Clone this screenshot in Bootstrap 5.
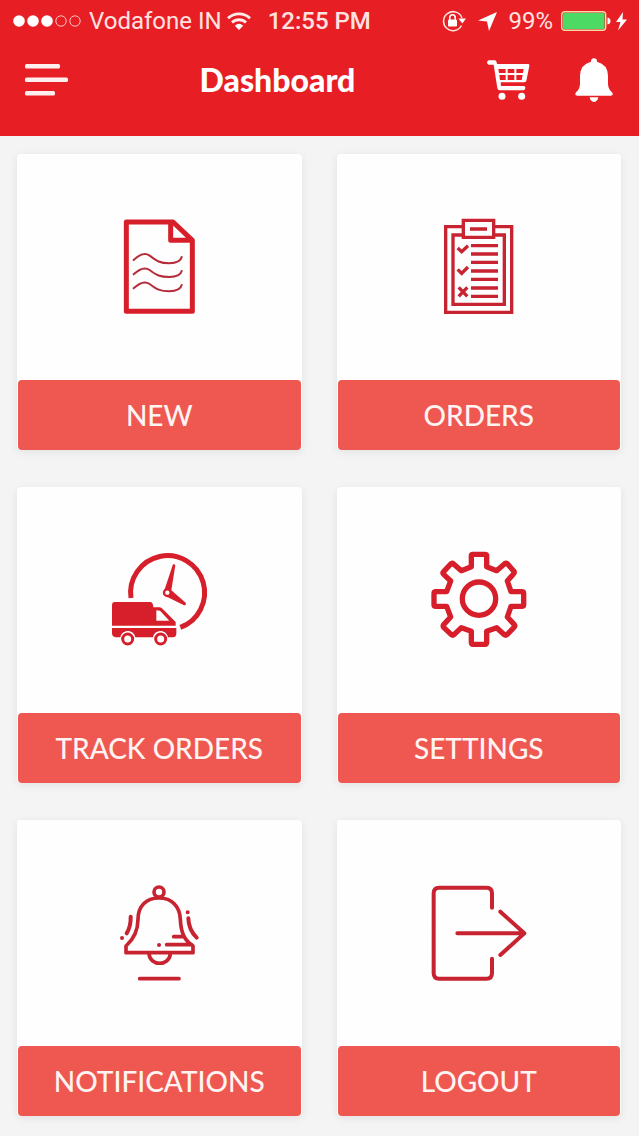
<!DOCTYPE html>
<html lang="en">
<head>
<meta charset="utf-8">
<meta name="viewport" content="width=device-width, initial-scale=1">
<title>Dashboard</title>
<link href="https://cdn.jsdelivr.net/npm/bootstrap@5.3.0/dist/css/bootstrap.min.css" rel="stylesheet">
<style>
  body { background: #f4f4f5; font-family: Lato, "Liberation Sans", sans-serif; }
  .app-header { background: #e81e25; color: #fff; height: 136px; }
  .status-bar { font: 400 24px/42px Roboto, "Liberation Sans", sans-serif; height: 42px; padding: 0 10px 0 13px; color: #ffe3e1; }
  .status-bar svg { flex: none; }
  .carrier { margin: 0 5px 0 8px; }
  .clock { margin-left: 17px; font-weight: 500; }
  .toolbar { height: 76px; padding: 0 26px 0 25px; }
  .toolbar h1 { font-size: 32px; line-height: 40px; font-weight: 900; }
  .icon-btn { border: 0; background: none; color: inherit; padding: 0; display: flex; }
  .bell-btn { margin-left: 45px; }
  .tiles { padding: 18px 18px 19px 17px; }
  .tiles .row { --bs-gutter-x: 35px; --bs-gutter-y: 37px; }
  .tile { border-radius: 4px; background: #fefefe; box-shadow: 0 2px 9px rgba(0,0,0,.08); color: #d71f2b; }
  .tile-art { height: 226px; }
  .tile-label { margin: 0 1px; height: 70px; line-height: 70px; background: #ee5851; color: #fff4f2; border-radius: 4px; font-family: "Lato Medium", Lato, "Liberation Sans", sans-serif; font-size: 28px; font-weight: 500; }
  .line { fill: none; stroke: currentColor; stroke-linecap: round; stroke-linejoin: round; }
  .line-dark { stroke: #c82331; }
  .line-wave { stroke: #b52b38; }
</style>
</head>
<body>
<header class="app-header">
  <div class="status-bar d-flex align-items-center text-nowrap">
    <svg width="68" height="12" viewBox="0 0 68 12" fill="#fff"><circle cx="6" cy="6" r="5.8"/><circle cx="20" cy="6" r="5.8"/><circle cx="34" cy="6" r="5.8"/><g fill="none" stroke="#ffc4c0"><circle cx="48" cy="6" r="5.2"/><circle cx="62" cy="6" r="5.2"/></g></svg>
    <span class="carrier">Vodafone IN</span>
    <svg width="24" height="18" viewBox="0 0 24 18" fill="none" stroke="#ffeceb" stroke-width="2.8"><path d="M1 6.3C7 .3 17 .3 23 6.3M5 10.6C9 6.8 15 6.8 19 10.6"/><path d="M12 18L7.800 13.700Q12 10 16.200 13.700Z" fill="#fff" stroke="none"/></svg>
    <span class="clock">12:55 PM</span>
    <div class="d-flex align-items-center ms-auto">
      <svg width="24" height="22" viewBox="0 0 24 22"><path d="M19.500 15.500A9.500 9.500 0 1 1 20 8" fill="none" stroke="#ffe3e1" stroke-width="1.500"/><path d="M16.500 8.500h7.500l-3.700 5z" fill="#fff"/><rect x="6" y="9.500" width="9" height="7" rx="1" fill="#fff"/><path d="M7.800 10V7.500a2.700 2.700 0 0 1 5.400 0V10" fill="none" stroke="#fff" stroke-width="1.600"/></svg>
      <svg class="mx-2" width="26" height="19" viewBox="0 0 26 19"><path d="M23 0L15 19 13 9.500 4 8.500Z" fill="#fff"/></svg>
      <span>99%</span>
      <svg class="ms-2" width="68" height="20" viewBox="0 0 68 20"><rect x=".7" y=".7" width="44" height="18.600" rx="3" fill="#b7322a" stroke="#ffd6a5" stroke-width="1.400"/><rect x="2" y="2" width="41.500" height="16" rx="1.500" fill="#4cd964"/><path d="M46.500 6.500q3 .5 3 3.500t-3 3.500z" fill="#fff"/><path d="M62 1L55 11h4.500L57 19.500 66 8.500h-4.500Z" fill="#fff"/></svg>
    </div>
  </div>
  <div class="toolbar d-flex align-items-center">
    <button class="icon-btn" type="button" aria-label="Menu">
      <svg width="43" height="32" viewBox="0 0 43 32" fill="#fff0ef"><rect width="35" height="4.500" rx="1.500"/><rect y="13.500" width="43" height="4.500" rx="1.500"/><rect y="27" width="30" height="4.500" rx="1.500"/></svg>
    </button>
    <h1 class="flex-grow-1 text-center mb-0">Dashboard</h1>
    <button class="icon-btn" type="button" aria-label="Cart">
      <svg width="43" height="40" viewBox="500 182 129 120" fill="#fff"><path fill-rule="evenodd" d="M505 183H523Q529 184 530 194H624Q628 195 627 200L618 244Q616 249 611 249H541L542 260H611Q616 262 615 267Q614 272 610 273H537Q532 272 531 266L520 196H505Q500 194 500 189Q501 184 505 183ZM534 209L536 221H556V209ZM562 209V221H582V209ZM588 209V221H608L610 209ZM537 227L539 242H556V227ZM562 227V242H582V227ZM588 227V242H604L607 227Z"/><circle cx="545" cy="291" r="10.500"/><circle cx="604" cy="291" r="10.500"/></svg>
    </button>
    <button class="icon-btn bell-btn" type="button" aria-label="Notifications">
      <svg width="38" height="44" viewBox="763 176 114 132" fill="#fff"><path d="M811 187Q811 177 820 177T829 187Q861 195 862 229V254Q863 270 874 279Q880 289 870 289H770Q760 289 766 279Q777 270 778 254V229Q779 195 811 187ZM807 294H833Q831 307 820 308Q809 307 807 294Z"/></svg>
    </button>
  </div>
</header>

<main class="tiles">
  <div class="row row-cols-2 mt-0">
    <div class="col mt-0"><a href="#new" class="tile d-block text-decoration-none">
      <div class="tile-art d-flex align-items-center justify-content-center">
        <svg width="120" height="120" viewBox="-33 6 360 360"><g class="line"><path stroke-width="15" d="M49 51H189L247 106V319H49ZM182 52V106H246"/><path class="line-wave" stroke-width="6" d="M71 165Q99 138 119 152C140 168 150 175 178 175Q211 174 215 156M71 208Q99 181 119 195C140 211 150 216 178 216Q211 215 215 198M71 250Q99 223 119 237C140 253 150 259 178 259Q211 258 215 240"/></g></svg>
      </div>
      <div class="tile-label text-center">NEW</div></a></div>

    <div class="col mt-0"><a href="#orders" class="tile d-block text-decoration-none">
      <div class="tile-art d-flex align-items-center justify-content-center">
        <svg width="120" height="120" viewBox="-33 6 360 360"><g fill="none" stroke="#c82331" stroke-width="10"><path d="M98 65H47V322H245V65H194M98 90H69V298H223V90H194M100 46H191V97H100ZM120 72H171"/><path d="M123 122H204M123 147H204M123 172H204M123 198H204M123 223H204M123 249H204M123 274H204"/><path d="M83 129L95 140 114 122M83 193L95 205 114 186M86 247L112 274M112 247L86 274"/></g></svg>
      </div>
      <div class="tile-label text-center">ORDERS</div></a></div>

    <div class="col"><a href="#track" class="tile d-block text-decoration-none">
      <div class="tile-art d-flex align-items-center justify-content-center">
        <svg width="120" height="120" viewBox="-3 0 360 360"><path d="M93 174A111 111 0 1 1 241 262" fill="none" stroke="currentColor" stroke-width="15"/><path fill="currentColor" d="M219 73Q224 71 226 76L214 151 257 188Q260 195 252 196L202 171 193 151Z"/><circle cx="202" cy="158" r="10" fill="#fff" stroke="currentColor" stroke-width="7"/><path fill="currentColor" fill-rule="evenodd" d="M43 186H152Q159 187 160 202H180Q185 203 189 208L227 246V257H36V194Q36 187 43 186ZM169 211V242H208L180 212ZM36 264H229V281Q228 291 220 292H204C199 267 164 267 159 292H106C101 267 66 267 61 292H47Q36 290 36 280Z"/><g fill="#fff" stroke="currentColor" stroke-width="9"><circle cx="83" cy="297" r="15"/><circle cx="182" cy="297" r="15"/></g></svg>
      </div>
      <div class="tile-label text-center">TRACK ORDERS</div></a></div>

    <div class="col"><a href="#settings" class="tile d-block text-decoration-none">
      <div class="tile-art d-flex align-items-center justify-content-center">
        <svg width="120" height="120" viewBox="-3 0 360 360"><g class="line" stroke-width="16"><path d="M154 47Q154 43 159 43H195Q200 43 200 47V80L230 92 254 71Q258 68 262 71L281 93Q285 97 281 101L262 123 273 155H305Q311 155 311 160V194Q311 199 305 199H273L262 231 283 254Q286 258 282 262L261 284Q257 287 253 284L230 263 200 274V307Q200 313 195 313H159Q154 313 154 307V274L124 263 102 284Q98 287 94 284L71 262Q68 258 71 254L92 231 80 199H48Q42 199 42 194V160Q42 155 48 155H80L92 123 71 103Q67 99 71 95L92 72Q96 68 100 71L124 92 154 80Z"/><circle cx="177" cy="176" r="50"/></g></svg>
      </div>
      <div class="tile-label text-center">SETTINGS</div></a></div>

    <div class="col"><a href="#notifications" class="tile d-block text-decoration-none">
      <div class="tile-art d-flex align-items-center justify-content-center">
        <svg width="120" height="120" viewBox="-18 -6 360 360"><g class="line line-dark" stroke-width="11"><path d="M63 233V213C89 190 99 167 99 133C99 93 123 69 162 69S225 95 226 133C228 176 239 196 264 213V233ZM132 237C136 274 192 274 196 237M206 185H234M185 209H260M104 311H222"/><circle cx="162" cy="51" r="15"/><path d="M77 125Q78 154 65 175M250 130Q251 164 275 188M51 189h.1M248 112h.1M162 210h.1" stroke-width="12"/></g></svg>
      </div>
      <div class="tile-label text-center">NOTIFICATIONS</div></a></div>

    <div class="col"><a href="#logout" class="tile d-block text-decoration-none">
      <div class="tile-art d-flex align-items-center justify-content-center">
        <svg width="120" height="120" viewBox="-3 -6 360 360"><g class="line line-dark" stroke-width="12"><path d="M216 98V55Q216 38 200 38H57Q41 38 41 55V294Q41 311 57 311H200Q216 311 216 294V251M112 175H312M241 110L313 175 241 240"/></g></svg>
      </div>
      <div class="tile-label text-center">LOGOUT</div></a></div>
  </div>
</main>
<script src="https://cdn.jsdelivr.net/npm/bootstrap@5.3.0/dist/js/bootstrap.bundle.min.js"></script>
</body>
</html>
